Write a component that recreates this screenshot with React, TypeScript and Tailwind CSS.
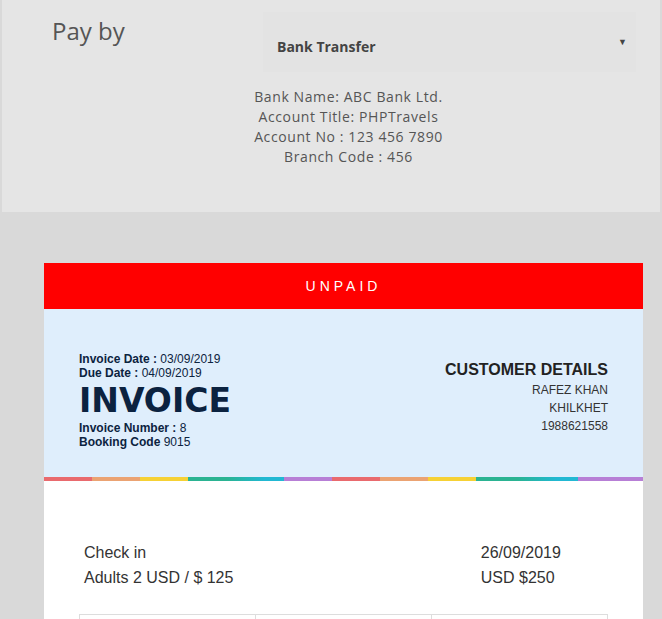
import React from 'react'

const stripe = [
  'w-[48px] bg-[#e96a6e]',
  'w-[48px] bg-[#eba373]',
  'w-[48px] bg-[#f6d135]',
  'w-[96px] bg-gradient-to-r from-[#2bb392] from-40% to-[#22b8d3] to-80%',
  'w-[48px] bg-[#b77fd6]',
  'w-[48px] bg-[#e96a6e]',
  'w-[48px] bg-[#eba373]',
  'w-[48px] bg-[#f6d135]',
  'w-[102px] bg-gradient-to-r from-[#2bb392] from-40% to-[#22b8d3] to-80%',
  'flex-1 bg-[#b77fd6]',
]

function PayPanel() {
  return (
    <div className="mx-[2px] h-[212px] bg-[#e5e5e5] font-['Open_Sans',sans-serif] text-[#555]">
      <div className="flex pt-3">
        <div className="w-[261px] pl-[50px] pt-[3px] text-[24px] leading-[32px]">Pay by</div>
        {/* select */}
        <div className="flex h-[60px] w-[373px] items-center justify-between bg-[#e3e3e3] pl-[14px] pr-[9px]">
          <span className="pt-2 text-[14px] font-bold text-[#444]">Bank Transfer</span>
          <span className="text-[9px] text-[#444]">▼</span>
        </div>
      </div>
      <div className="flex justify-center pl-[35px] pt-[15px] text-center text-[14px] leading-[20px] tracking-[0.6px]">
        <div>
          <div>Bank Name: ABC Bank Ltd.</div>
          <div>Account Title: PHPTravels</div>
          <div>Account No : 123 456 7890</div>
          <div>Branch Code : 456</div>
        </div>
      </div>
    </div>
  )
}

function InvoiceHead() {
  return (
    <div className="flex items-start justify-between bg-[#dfeefc] px-[35px] pb-[28px] pt-[43px] font-['Liberation_Sans',Arial,sans-serif]">
      <div className="text-[12px] leading-[14px] text-[#0c2340]">
        <div><b>Invoice Date :</b> 03/09/2019</div>
        <div><b>Due Date :</b> 04/09/2019</div>
        <div className="mt-[3px] font-['DejaVu_Sans',sans-serif] text-[33px] font-bold leading-[36px] text-[#0b2240]">INVOICE</div>
        <div className="mt-[2px]"><b>Invoice Number :</b> 8</div>
        <div><b>Booking Code</b> 9015</div>
      </div>
      <div className="mt-2 text-right text-[#333]">
        <div className="text-[16px] font-bold leading-[20px] text-[#222]">CUSTOMER DETAILS</div>
        <div className="mt-[1px] text-[12px] leading-[18px]">
          <div>RAFEZ KHAN</div>
          <div>KHILKHET</div>
          <div>1988621558</div>
        </div>
      </div>
    </div>
  )
}

export default function App() {
  return (
    <div className="h-[619px] overflow-hidden bg-[#d9d9d9]">
      <PayPanel />

      <div className="ml-[44px] mt-[51px] w-[599px]">
        <div className="flex h-[46px] items-center justify-center bg-[#ff0000] font-['Liberation_Sans',Arial,sans-serif] text-[14px] tracking-[4px] text-white">
          UNPAID
        </div>

        <InvoiceHead />

        <div className="flex h-[4px]">
          {stripe.map((c, i) => (
            <div key={i} className={c} />
          ))}
        </div>

        <div className="bg-white px-[35px] pb-10 pt-[59px] font-['Liberation_Sans',Arial,sans-serif] text-[16px] leading-[25px] text-[#333]">
          <div className="flex">
            <div className="w-3/4 pl-[5px]">
              <div>Check in</div>
              <div>Adults 2 USD / $ 125</div>
            </div>
            <div className="w-1/4 pl-[5px]">
              <div>26/09/2019</div>
              <div>USD $250</div>
            </div>
          </div>
          <div className="mt-[24px] grid grid-cols-3 border-l border-t border-[#ddd]">
            <div className="h-10 border-r border-[#ddd]" />
            <div className="h-10 border-r border-[#ddd]" />
            <div className="h-10 border-r border-[#ddd]" />
          </div>
        </div>
      </div>
    </div>
  )
}
